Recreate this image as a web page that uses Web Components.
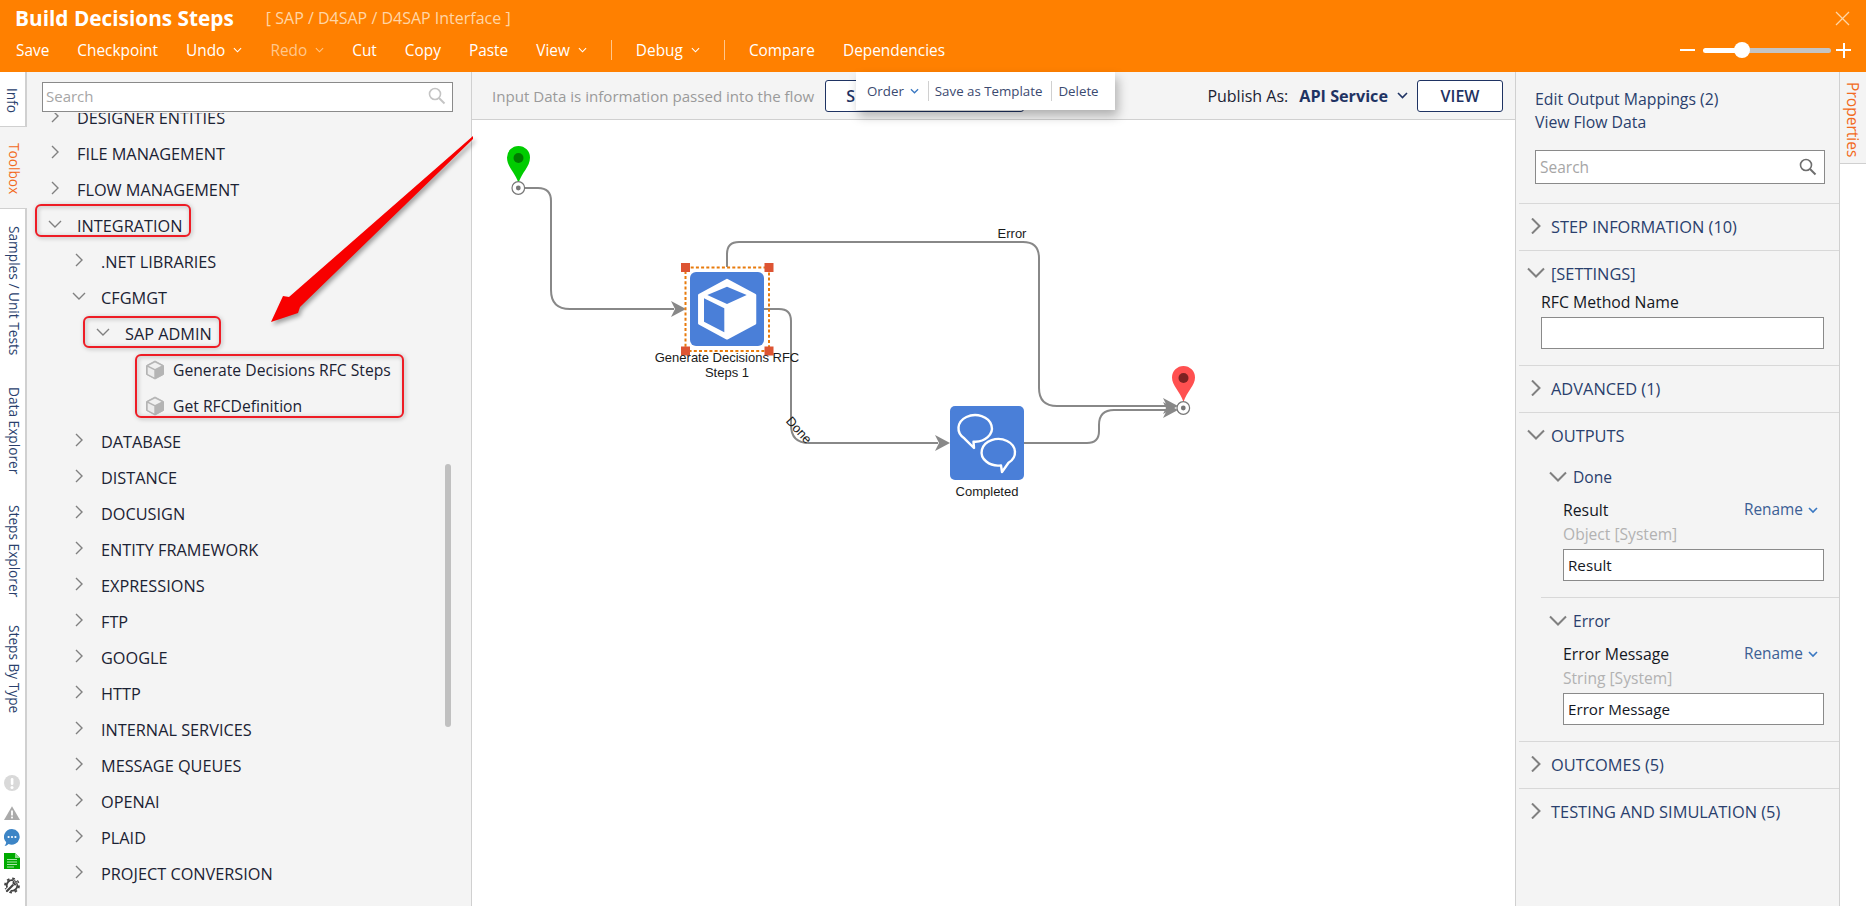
<!DOCTYPE html>
<html lang="en">
<head>
<meta charset="utf-8">
<title>Build Decisions Steps</title>
<style>
    html, body { margin: 0; height: 100%; overflow: hidden; background: #fff; }
    body { font-family: "Open Sans", "Liberation Sans", sans-serif; }
    #app { position: relative; display: flex; flex-direction: column; width: 1866px; height: 906px; overflow: hidden; }
    #main { flex: 1; display: flex; min-height: 0; }
</style>
</head>
<body>
<div id="app">
    <fd-header title="Build Decisions Steps" path="[ SAP / D4SAP / D4SAP Interface ]">
        <menu-item>Save</menu-item>
        <menu-item>Checkpoint</menu-item>
        <menu-item caret>Undo</menu-item>
        <menu-item caret dim>Redo</menu-item>
        <menu-item>Cut</menu-item>
        <menu-item>Copy</menu-item>
        <menu-item>Paste</menu-item>
        <menu-item caret>View</menu-item>
        <menu-item sep></menu-item>
        <menu-item caret>Debug</menu-item>
        <menu-item sep></menu-item>
        <menu-item>Compare</menu-item>
        <menu-item>Dependencies</menu-item>
    </fd-header>
    <div id="main">
        <fd-rail></fd-rail>
        <fd-toolbox>
            <tree-row level="0">DESIGNER ENTITIES</tree-row>
            <tree-row level="0">FILE MANAGEMENT</tree-row>
            <tree-row level="0">FLOW MANAGEMENT</tree-row>
            <tree-row level="0" open>INTEGRATION</tree-row>
            <tree-row level="1">.NET LIBRARIES</tree-row>
            <tree-row level="1" open>CFGMGT</tree-row>
            <tree-row level="2" open>SAP ADMIN</tree-row>
            <tree-row level="3" leaf>Generate Decisions RFC Steps</tree-row>
            <tree-row level="3" leaf>Get RFCDefinition</tree-row>
            <tree-row level="1">DATABASE</tree-row>
            <tree-row level="1">DISTANCE</tree-row>
            <tree-row level="1">DOCUSIGN</tree-row>
            <tree-row level="1">ENTITY FRAMEWORK</tree-row>
            <tree-row level="1">EXPRESSIONS</tree-row>
            <tree-row level="1">FTP</tree-row>
            <tree-row level="1">GOOGLE</tree-row>
            <tree-row level="1">HTTP</tree-row>
            <tree-row level="1">INTERNAL SERVICES</tree-row>
            <tree-row level="1">MESSAGE QUEUES</tree-row>
            <tree-row level="1">OPENAI</tree-row>
            <tree-row level="1">PLAID</tree-row>
            <tree-row level="1">PROJECT CONVERSION</tree-row>
        </fd-toolbox>
        <fd-canvas></fd-canvas>
        <fd-props>
            <prop-section label="STEP INFORMATION (10)"></prop-section>
            <prop-section label="[SETTINGS]" open>
                <prop-field label="RFC Method Name" indent="22"></prop-field>
            </prop-section>
            <prop-section label="ADVANCED (1)"></prop-section>
            <prop-section label="OUTPUTS" open flush>
                <prop-sub label="Done">
                    <prop-field label="Result" type="Object [System]" value="Result" rename indent="44"></prop-field>
                </prop-sub>
                <prop-sub label="Error" divided>
                    <prop-field label="Error Message" type="String [System]" value="Error Message" rename indent="44"></prop-field>
                </prop-sub>
            </prop-section>
            <prop-section label="OUTCOMES (5)"></prop-section>
            <prop-section label="TESTING AND SIMULATION (5)"></prop-section>
        </fd-props>
        <props-tab></props-tab>
    </div>
    <fd-annotations></fd-annotations>
</div>

<script>
    const FONT = '"Open Sans", "Liberation Sans", sans-serif';

    // Orange title bar and command row
    class FdHeader extends HTMLElement {
        connectedCallback() {
            const root = this.attachShadow({ mode: 'open' });
            root.innerHTML = `
                <style>
                    :host { display: block; height: 72px; background: #ff8000; color: #fff; font-family: ${FONT}; flex: none; }
                    .top { display: flex; align-items: center; height: 36px; padding: 0 16px 0 15px; }
                    h1 { margin: 0; font-size: 20.8px; font-weight: 700; line-height: 36px; }
                    .path { margin-left: 32px; font-size: 16px; color: #ffd6a6; }
                    .close { margin-left: auto; width: 15px; height: 15px; }
                    .close line { stroke: #ffd6a6; stroke-width: 1.2; }
                    .row { display: flex; align-items: center; height: 28px; padding: 0 15px 0 16px; gap: 28px; }
                    .zoom { margin-left: auto; display: flex; align-items: center; }
                    .bar { width: 15px; height: 2px; background: #fff; }
                    .track { position: relative; width: 128px; height: 5px; margin: 0 5px 0 8px; border-radius: 3px; background: linear-gradient(90deg, #fff 39px, #c4c4c4 39px); }
                    .thumb { position: absolute; left: 31px; top: -6px; width: 16px; height: 16px; border-radius: 50%; background: #fff; }
                    .plus { position: relative; }
                    .plus::after { content: ""; position: absolute; left: 6.5px; top: -6.5px; width: 2px; height: 15px; background: #fff; }
                </style>
                <div class="top">
                    <h1>${this.getAttribute('title')}</h1>
                    <span class="path">${this.getAttribute('path')}</span>
                    <svg class="close" viewBox="0 0 15 15"><line x1="1" y1="1" x2="14" y2="14"></line><line x1="14" y1="1" x2="1" y2="14"></line></svg>
                </div>
                <div class="row">
                    <slot></slot>
                    <div class="zoom">
                        <div class="bar"></div>
                        <div class="track"><div class="thumb"></div></div>
                        <div class="bar plus"></div>
                    </div>
                </div>
            `;
        }
    }

    class MenuItem extends HTMLElement {
        connectedCallback() {
            const root = this.attachShadow({ mode: 'open' });
            if (this.hasAttribute('sep')) {
                root.innerHTML = `<style>:host { display: block; width: 1px; height: 20px; margin: 0 -4px; background: #ffc78c; }</style>`;
                return;
            }
            const caret = this.hasAttribute('caret')
                ? '<svg viewBox="0 0 10 6" width="9" height="6"><polyline points="1,1 5,5 9,1" fill="none" stroke="currentColor" stroke-width="1.2"></polyline></svg>'
                : '';
            root.innerHTML = `
                <style>
                    :host { display: flex; align-items: center; gap: 8px; font-size: 15.4px; color: ${this.hasAttribute('dim') ? '#ffc78c' : '#fff'}; }
                </style>
                <slot></slot>${caret}
            `;
        }
    }

    // Vertical tabs on the far left
    class FdRail extends HTMLElement {
        connectedCallback() {
            const tabs = [['Samples / Unit Tests', 17], ['Data Explorer', 32], ['Steps Explorer', 30], ['Steps By Type', 28]];
            const root = this.attachShadow({ mode: 'open' });
            root.innerHTML = `
                <style>
                    :host { display: flex; flex-direction: column; flex: none; width: 27px; box-sizing: border-box; border-right: 2px solid #d0d0d0; background: #fff; font-family: ${FONT}; font-size: 13.7px; color: #2a3f6d; }
                    .tab { writing-mode: vertical-rl; width: 27px; box-sizing: border-box; padding-right: 4px; white-space: nowrap; line-height: 18px; }
                    .info { height: 55px; padding-top: 16px; border-bottom: 1px solid #d0d0d0; width: 25px; }
                    .toolbox { height: 82px; padding-top: 16px; box-sizing: border-box; border-bottom: 1px solid #d0d0d0; background: #f4f4f4; color: #f26a21; position: relative; z-index: 1; }
                    .status { margin-top: auto; padding: 0 0 12px 4px; display: flex; flex-direction: column; }
                    svg { display: block; width: 16px; }
                </style>
                <div class="tab info">Info</div>
                <div class="tab toolbox">Toolbox</div>
                ${tabs.map(([t, gap]) => `<div class="tab" style="margin-top:${gap}px">${t}</div>`).join('')}
                <div class="status">
                    <svg viewBox="0 0 16 16" height="16" style="margin-bottom:15px"><circle cx="8" cy="8" r="8" fill="#d9d9d9"></circle><rect x="6.8" y="3" width="2.6" height="7" rx="1.2" fill="#fff"></rect><circle cx="8" cy="12.4" r="1.5" fill="#fff"></circle></svg>
                    <svg viewBox="0 0 16 14" height="14" style="margin-bottom:9px"><path d="M8 .2 L16 14 H0 Z" fill="#aaa"></path><rect x="7.1" y="4.5" width="1.8" height="5" fill="#fff"></rect><rect x="7.1" y="10.6" width="1.8" height="1.8" fill="#fff"></rect></svg>
                    <svg viewBox="0 0 16 18" height="18" style="margin-bottom:6px"><path d="M8 0 A8 7.8 0 1 1 4.6 15 Q2.6 16.8 .6 17 Q2 15.4 2.2 13.2 A8 7.8 0 0 1 8 0 Z" fill="#3d85c6"></path><circle cx="4.6" cy="8" r="1.1" fill="#fff"></circle><circle cx="8" cy="8" r="1.1" fill="#fff"></circle><circle cx="11.4" cy="8" r="1.1" fill="#fff"></circle></svg>
                    <svg viewBox="0 0 16 16" height="16" style="margin-bottom:8px"><path d="M0 0 H11 L16 5 V16 H0 Z" fill="#00aa00"></path><path d="M11 0 L16 5 H11 Z" fill="#8fdc8f"></path><path d="M3 6.5 H13 M3 9 H13 M3 11.5 H13 M3 14 H10" stroke="#a8e8a8" stroke-width="1.2"></path></svg>
                    <svg viewBox="0 0 16 17" height="17">
                        <circle cx="8" cy="8.5" r="5.3" fill="none" stroke="#444" stroke-width="1.8"></circle>
                        <circle cx="8" cy="8.5" r="6.9" fill="none" stroke="#444" stroke-width="2" stroke-dasharray="2.6 2.82"></circle>
                        <path d="M2.5 14.5 L9.5 7.5" stroke="#fff" stroke-width="4.4"></path>
                        <path d="M3 14 L9.5 7.5" stroke="#444" stroke-width="2.2" stroke-linecap="round"></path>
                        <path d="M8.2 6.2 A3 3 0 0 1 12 3 L10.4 5 L11.8 6.4 L13.6 4.8 A3 3 0 0 1 10.2 8.6 Z" fill="#444" stroke="#fff" stroke-width=".5"></path>
                    </svg>
                </div>
            `;
        }
    }

    // Toolbox tree with its search box
    class FdToolbox extends HTMLElement {
        connectedCallback() {
            const root = this.attachShadow({ mode: 'open' });
            root.innerHTML = `
                <style>
                    :host { display: flex; flex-direction: column; flex: none; width: 445px; box-sizing: border-box; background: #f4f4f4; border-right: 1px solid #d0d0d0; font-family: ${FONT}; position: relative; }
                    .search { flex: none; height: 30px; margin: 10px 18px 1px 15px; box-sizing: border-box; border: 1px solid #8a8a8a; background: #fff; display: flex; align-items: center; justify-content: space-between; padding: 0 6px 2px 3px; font-size: 15px; color: #a6a6a6; }
                    .list { flex: 1; overflow: hidden; }
                    .inner { margin-top: -13px; }
                    .thumb { position: absolute; left: 418px; top: 392px; width: 6px; height: 263px; border-radius: 3px; background: #c0c0c0; }
                </style>
                <div class="search">Search
                    <svg width="18" height="18" viewBox="0 0 18 18" fill="none" stroke="#c4c4c4" stroke-width="1.6"><circle cx="7" cy="7" r="5.5"></circle><line x1="11" y1="11" x2="16.5" y2="16.5" stroke-width="2"></line></svg>
                </div>
                <div class="list"><div class="inner"><slot></slot></div></div>
                <div class="thumb"></div>
            `;
        }
    }

    class TreeRow extends HTMLElement {
        connectedCallback() {
            const level = parseInt(this.getAttribute('level') || '0', 10);
            const isLeaf = this.hasAttribute('leaf');
            const isOpen = this.hasAttribute('open');
            const root = this.attachShadow({ mode: 'open' });
            const icon = isLeaf
                ? `<svg class="cube" width="20" height="20" viewBox="0 0 20 20">
                        <path d="M10 1 L18.5 5.5 V14.5 L10 19 L1.5 14.5 V5.5 Z" fill="#b4b4b4" stroke="#b4b4b4" stroke-linejoin="round"></path>
                        <path d="M10 2.6 L16.5 5.8 L10 9 L3.5 5.8 Z" fill="#f0f0f0"></path>
                        <path d="M2.7 7 L9.3 10.2 V17.4 L2.7 14 Z" fill="#ececec"></path>
                    </svg>`
                : `<svg class="chev" width="14" height="14" viewBox="0 0 14 14" fill="none" stroke="#808080" stroke-width="1.4">
                        ${isOpen ? '<polyline points="1,4 7,10 13,4"></polyline>' : '<polyline points="4,1 10,7 4,13"></polyline>'}
                    </svg>`;
            root.innerHTML = `
                <style>
                    :host { display: flex; align-items: center; height: 36px; padding-left: ${21 + 24 * level + (isLeaf ? 24 : 0)}px; font-size: ${isLeaf ? 15.7 : 16.3}px; color: #1b2233; white-space: nowrap; }
                    .chev { margin: -4px 15px 0 0; flex: none; }
                    .cube { margin: 0 8px 0 1px; flex: none; }
                </style>
                ${icon}<slot></slot>
            `;
        }
    }

    // Flow designer area: toolbar plus the free canvas of nodes
    class FdCanvas extends HTMLElement {
        connectedCallback() {
            const root = this.attachShadow({ mode: 'open' });
            root.innerHTML = `
                <style>
                    :host { display: flex; flex-direction: column; flex: 1; min-width: 0; position: relative; background: #fff; font-family: ${FONT}; }
                    .bar { flex: none; height: 48px; box-sizing: border-box; border-bottom: 1px solid #d0d0d0; padding: 0 12px 0 20px; background: #f4f4f4; display: flex; align-items: center; font-size: 15.1px; color: #9a9a9a; }
                    .btn { box-sizing: border-box; height: 32px; border: 1px solid #1f3363; border-radius: 3px; background: #fff; color: #1f3363; font-size: 16px; font-weight: 600; display: flex; align-items: center; }
                    .set { width: 199px; margin-left: 11px; padding-left: 20px; }
                    .view { width: 86px; justify-content: center; }
                    .pub { margin-left: auto; font-size: 16px; color: #1b2233; }
                    .api { margin: 0 9px 0 11px; font-size: 16.2px; color: #1f3363; font-weight: 700; }
                    .api-c { margin-right: 9px; }
                    .float { position: absolute; left: 384px; top: 0; width: 259px; height: 38px; box-sizing: border-box; background: #fff; box-shadow: 3px 6px 10px rgba(0, 0, 0, .28); display: flex; align-items: center; padding-left: 11px; font-size: 13.3px; color: #3b4a70; }
                    .float i { width: 1px; height: 20px; background: #d0d0d0; margin: 0 6px 0 9px; }
                    .float svg { margin-left: 6px; }
                    .stage { flex: 1; min-height: 0; }
                    .stage svg { display: block; width: 100%; height: 100%; }
                    text { font: 13px "Liberation Sans", Arial, sans-serif; fill: #1a1a1a; text-anchor: middle; }
                    .link { fill: none; stroke: #888; stroke-width: 2; }
                    .head { fill: #888; }
                </style>
                <div class="bar">
                    Input Data is information passed into the flow
                    <div class="btn set">S</div>
                    <span class="pub">Publish As:</span>
                    <span class="api">API Service</span>
                    <svg class="api-c" width="11" height="7" viewBox="0 0 11 7" fill="none" stroke="#1f3363" stroke-width="1.6"><polyline points="1,1 5.5,5.5 10,1"></polyline></svg>
                    <div class="btn view">VIEW</div>
                </div>
                <div class="float">
                    Order
                    <svg width="9" height="6" viewBox="0 0 10 6" fill="none" stroke="#3a78c2" stroke-width="1.4"><polyline points="1,1 5,5 9,1"></polyline></svg>
                    <i></i>Save as Template<i></i>Delete
                </div>
                <div class="stage">
                    <svg viewBox="472 120 1043 786" preserveAspectRatio="xMinYMin">
                        <path class="link" d="M524 188 H538 Q551 188 551 201 V290 Q551 309 570 309 H674"></path>
                        <path class="head" d="M686 309 L671 301 L675 309 L671 317 Z"></path>
                        <path class="link" d="M727 267 V254 Q727 242 739 242 H1023 Q1039 242 1039 258 V388 Q1039 406 1057 406 H1168"></path>
                        <path class="link" d="M764 309 H779 Q791 309 791 321 V425 Q791 443 809 443 H938"></path>
                        <path class="head" d="M950 443 L935 435 L939 443 L935 451 Z"></path>
                        <path class="link" d="M1024 443 H1087 Q1099 443 1099 431 V425 Q1099 410 1114 410 H1168"></path>
                        <path class="head" d="M1178 406 L1163 398 L1167 406 L1163 414 Z"></path>
                        <path class="head" d="M1178 410 L1163 402 L1167 410 L1163 418 Z"></path>

                        <path d="M518.5 183 C515 172 507 167 507 157.5 A11.5 11.5 0 1 1 530 157.5 C530 167 522 172 518.5 183 Z" fill="#00cc00"></path>
                        <circle cx="518.5" cy="158" r="5" fill="#007a00"></circle>
                        <circle cx="518.3" cy="188" r="6.3" fill="#fff" stroke="#777" stroke-width="1.2"></circle>
                        <circle cx="518.3" cy="188" r="2.4" fill="#777"></circle>

                        <path d="M1183.5 402 C1180 391 1172 386 1172 377.5 A11.5 11.5 0 1 1 1195 377.5 C1195 386 1187 391 1183.5 402 Z" fill="#ff5050"></path>
                        <circle cx="1183.5" cy="378" r="5" fill="#7d2222"></circle>
                        <circle cx="1183.3" cy="408" r="6.3" fill="#fff" stroke="#777" stroke-width="1.2"></circle>
                        <circle cx="1183.3" cy="408" r="2.4" fill="#777"></circle>

                        <rect x="690" y="272" width="74" height="74" rx="6" fill="#4a7fd8"></rect>
                        <path d="M727 280 L755 295 V323.3 L727 338.3 L699.3 323.3 V295 Z" fill="#fff" stroke="#fff" stroke-width="2.5" stroke-linejoin="round"></path>
                        <path d="M727 286.7 L746.7 295 L727 304 L707.3 295 Z" fill="#4a7fd8"></path>
                        <path d="M704 298.3 L724.3 308.3 V332.3 L704 321.7 Z" fill="#4a7fd8"></path>
                        <rect x="685.5" y="267.5" width="83.5" height="83.5" fill="none" stroke="#e87b0c" stroke-width="2" stroke-dasharray="3 2.2"></rect>
                        <rect x="681" y="263" width="9" height="9" fill="#dd5433"></rect>
                        <rect x="764.5" y="263" width="9" height="9" fill="#dd5433"></rect>
                        <rect x="681" y="346.5" width="9" height="9" fill="#dd5433"></rect>
                        <rect x="764.5" y="346.5" width="9" height="9" fill="#dd5433"></rect>
                        <text x="727" y="362">Generate Decisions RFC</text>
                        <text x="727" y="376.5">Steps 1</text>

                        <rect x="950" y="406" width="74" height="74" rx="5" fill="#4a7fd8"></rect>
                        <g fill="none" stroke="#fff" stroke-width="2.4" stroke-linejoin="round">
                            <path d="M973.5 441.6 A16.7 13.3 0 1 0 964.5 438.6 L974 448 Z"></path>
                            <path d="M1008.5 462.8 A16.7 13.3 0 1 0 1001 465.4 L1002 472 Z"></path>
                        </g>
                        <text x="987" y="496">Completed</text>

                        <text x="1012" y="238">Error</text>
                        <text transform="translate(799 430) rotate(48)" y="4.5">Done</text>
                    </svg>
                </div>
            `;
        }
    }

    // Right hand properties panel
    class FdProps extends HTMLElement {
        connectedCallback() {
            const root = this.attachShadow({ mode: 'open' });
            root.innerHTML = `
                <style>
                    :host { display: block; flex: none; width: 325px; box-sizing: border-box; border-left: 1px solid #d0d0d0; border-right: 1px solid #d0d0d0; background: #f4f4f4; font-family: ${FONT}; color: #2a3f6d; font-size: 15.8px; }
                    .link { padding-left: 19px; line-height: 23px; }
                    .first { margin-top: 16px; }
                    .search { height: 34px; margin: 16px 14px 19px 19px; box-sizing: border-box; border: 1px solid #8a8a8a; background: #fff; display: flex; align-items: center; justify-content: space-between; padding: 0 7px 0 4px; font-size: 15.5px; color: #a6a6a6; }
                </style>
                <div class="link first">Edit Output Mappings (2)</div>
                <div class="link">View Flow Data</div>
                <div class="search">Search
                    <svg width="18" height="18" viewBox="0 0 18 18" fill="none" stroke="#6e6e6e" stroke-width="1.6"><circle cx="7" cy="7" r="5.5"></circle><line x1="11" y1="11" x2="16.5" y2="16.5" stroke-width="2"></line></svg>
                </div>
                <slot></slot>
            `;
        }
    }

    class PropSection extends HTMLElement {
        connectedCallback() {
            const isOpen = this.hasAttribute('open');
            const root = this.attachShadow({ mode: 'open' });
            root.innerHTML = `
                <style>
                    :host { display: block; margin-left: 3px; border-top: 1px solid #d8d8d8; }
                    .head { display: flex; align-items: center; height: 46px; box-sizing: border-box; padding: 0 0 2px 8px; color: #2a3f6d; font-size: 16.4px; }
                    .head svg { flex: none; margin-right: 6px; fill: none; stroke: #808080; stroke-width: 2; }
                    .body { display: ${isOpen ? 'block' : 'none'}; margin-top: -10px; }
                    :host([flush]) .body { margin-top: 0; margin-bottom: 0; }
                </style>
                <div class="head">
                    <svg width="18" height="16" viewBox="0 0 18 16">${isOpen ? '<polyline points="1,3.5 9,11.5 17,3.5"></polyline>' : '<polyline points="5,0.5 12.5,8 5,15.5"></polyline>'}</svg>
                    <span>${this.getAttribute('label')}</span>
                </div>
                <div class="body"><slot></slot></div>
            `;
        }
    }

    class PropSub extends HTMLElement {
        connectedCallback() {
            const root = this.attachShadow({ mode: 'open' });
            root.innerHTML = `
                <style>
                    :host { display: block; }
                    :host([divided]) { margin-left: 22px; border-top: 1px solid #d8d8d8; padding-top: 5px; }
                    :host([divided]) .head { padding-left: 8px; }
                    .head { display: flex; align-items: center; height: 36px; padding-left: 30px; color: #2a3f6d; font-size: 15.6px; }
                    .head svg { flex: none; margin-right: 6px; fill: none; stroke: #808080; stroke-width: 2; }
                    :host([divided]) .body { margin-left: -22px; }
                </style>
                <div class="head">
                    <svg width="18" height="16" viewBox="0 0 18 16"><polyline points="1,3.5 9,11.5 17,3.5"></polyline></svg>
                    <span>${this.getAttribute('label')}</span>
                </div>
                <div class="body"><slot></slot></div>
            `;
        }
    }

    class PropField extends HTMLElement {
        connectedCallback() {
            const type = this.getAttribute('type');
            const root = this.attachShadow({ mode: 'open' });
            root.innerHTML = `
                <style>
                    :host { display: block; margin: 5px 0 0 ${this.getAttribute('indent')}px; padding: 0 15px 16px 0; font-size: 15.2px; color: #14181f; }
                    .top { display: flex; justify-content: space-between; line-height: 20px; font-weight: 500; font-size: 15.8px; }
                    .rename { display: flex; align-items: center; gap: 5px; padding-right: 6px; font-weight: 400; font-size: 15.4px; color: #3c5f94; }
                    .type { margin-top: 4px; line-height: 20px; font-size: 15.6px; color: #b2b2b2; }
                    .input { height: 32px; margin-top: 5px; box-sizing: border-box; border: 1px solid #8a8a8a; background: #fff; padding-left: 4px; line-height: 30px; }
                </style>
                <div class="top"><span>${this.getAttribute('label')}</span>
                    ${this.hasAttribute('rename') ? '<span class="rename">Rename <svg width="10" height="7" viewBox="0 0 10 7" fill="none" stroke="#3a78c2" stroke-width="1.6"><polyline points="1,1 5,5 9,1"></polyline></svg></span>' : ''}
                </div>
                ${type ? `<div class="type">${type}</div>` : ''}
                <div class="input">${this.getAttribute('value') || ''}</div>
            `;
        }
    }

    class PropsTab extends HTMLElement {
        connectedCallback() {
            const root = this.attachShadow({ mode: 'open' });
            root.innerHTML = `
                <style>
                    :host { display: block; flex: none; width: 26px; background: #fff; font-family: ${FONT}; }
                    div { writing-mode: vertical-rl; height: 92px; box-sizing: border-box; padding: 10px 0 0 0; border-bottom: 1px solid #d0d0d0; background: #f4f4f4; color: #f26a21; font-size: 15.6px; line-height: 26px; }
                </style>
                <div>Properties</div>
            `;
        }
    }

    // Red callouts drawn over the screenshot
    class FdAnnotations extends HTMLElement {
        connectedCallback() {
            const root = this.attachShadow({ mode: 'open' });
            root.innerHTML = `
                <style>
                    :host { position: absolute; inset: 0; pointer-events: none; }
                    svg { display: block; width: 100%; height: 100%; }
                    rect { fill: none; stroke: #ee1c25; stroke-width: 2; filter: drop-shadow(1px 1px 2px rgba(0, 0, 0, .3)); }
                    path { fill: #f80000; filter: drop-shadow(2px 3px 2px rgba(0, 0, 0, .35)); }
                </style>
                <svg viewBox="0 0 1866 906">
                    <rect x="36" y="205" width="154" height="31" rx="5"></rect>
                    <rect x="84" y="317" width="136" height="30" rx="5"></rect>
                    <rect x="136" y="355" width="267" height="62" rx="5"></rect>
                    <path d="M473 136 L473 139 L300 307 L298 313 L271 322 L283 296 L289 297 Z"></path>
                </svg>
            `;
        }
    }

    customElements.define('fd-header', FdHeader);
    customElements.define('menu-item', MenuItem);
    customElements.define('fd-rail', FdRail);
    customElements.define('fd-toolbox', FdToolbox);
    customElements.define('tree-row', TreeRow);
    customElements.define('fd-canvas', FdCanvas);
    customElements.define('fd-props', FdProps);
    customElements.define('prop-section', PropSection);
    customElements.define('prop-sub', PropSub);
    customElements.define('prop-field', PropField);
    customElements.define('props-tab', PropsTab);
    customElements.define('fd-annotations', FdAnnotations);
</script>
</body>
</html>
